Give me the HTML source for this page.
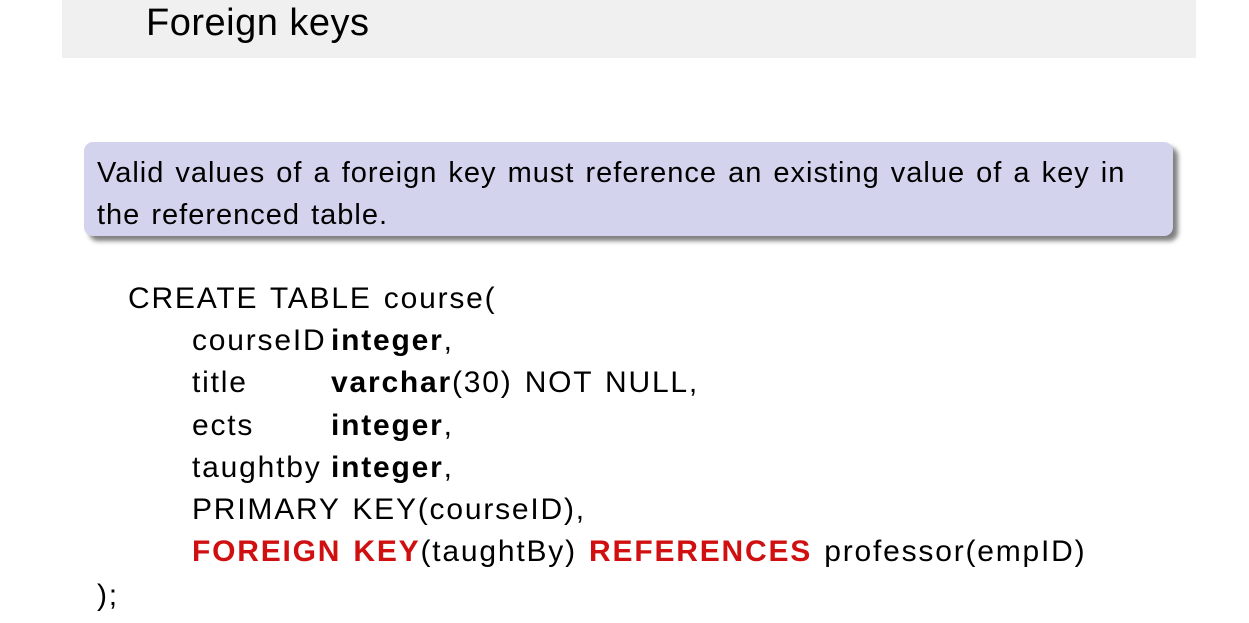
<!DOCTYPE html>
<html><head><meta charset="utf-8"><style>
body{margin:0;width:1249px;height:623px;background:#fff;position:relative;overflow:hidden;font-family:"Liberation Sans",sans-serif;color:#000}
.hdr{position:absolute;left:62px;top:0;width:1134px;height:58px;background:#f0f0f0}
.title{position:absolute;left:146px;top:1px;font-size:38px;line-height:44px;letter-spacing:0.5px}
.box{position:absolute;left:84px;top:142px;width:1089px;height:94px;background:#d3d3ed;border-radius:9px;box-shadow:5px 5px 5px rgba(0,0,0,0.5)}
.bt{position:absolute;left:97px;top:152px;font-size:29px;line-height:42px;letter-spacing:1px;word-spacing:2px}
.l{position:absolute;font-size:30px;line-height:36px;white-space:nowrap;letter-spacing:1.8px;word-spacing:2px}
b.r{color:#d01010}
</style></head><body>
<div class="hdr"></div>
<div class="title">Foreign keys</div>
<div class="box"></div>
<div class="bt">Valid values of a foreign key must reference an existing value of a key in<br>the referenced table.</div>
<div class="l" style="left:128px;top:281px">CREATE TABLE course(</div>
<div class="l" style="left:192px;top:323px">courseID</div><div class="l" style="left:331px;top:323px"><b>integer</b>,</div>
<div class="l" style="left:192px;top:365px">title</div><div class="l" style="left:331px;top:365px"><b>varchar</b>(30) NOT NULL,</div>
<div class="l" style="left:192px;top:408px">ects</div><div class="l" style="left:331px;top:408px"><b>integer</b>,</div>
<div class="l" style="left:192px;top:450px">taughtby</div><div class="l" style="left:331px;top:450px"><b>integer</b>,</div>
<div class="l" style="left:192px;top:492px">PRIMARY KEY(courseID),</div>
<div class="l" style="left:192px;top:534px"><b class="r">FOREIGN KEY</b>(taughtBy) <b class="r">REFERENCES</b> professor(empID)</div>
<div class="l" style="left:97px;top:578px">);</div>
</body></html>
